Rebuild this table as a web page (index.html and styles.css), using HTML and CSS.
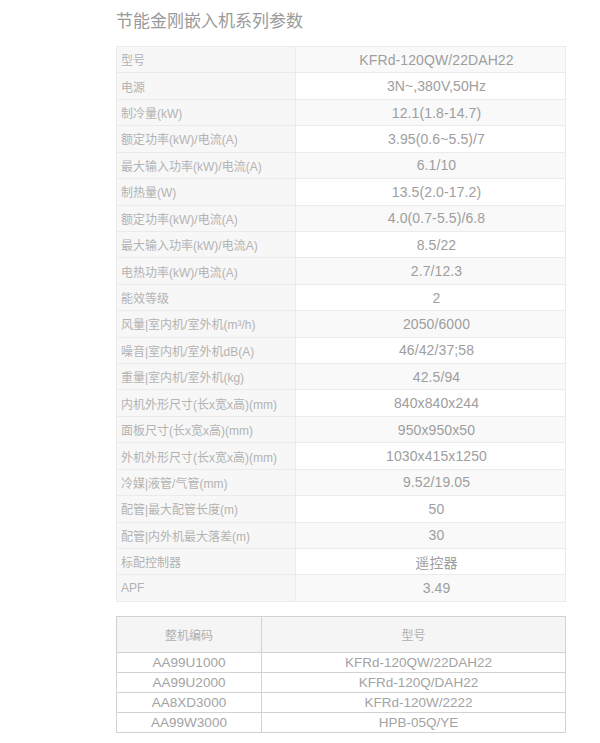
FILE: index.html
```html
<!DOCTYPE html>
<html lang="zh">
<head>
<meta charset="utf-8">
<title>节能金刚嵌入机系列参数</title>
<link rel="stylesheet" href="styles.css">
</head>
<body>
<div class="page">
  <h1 class="title">节能金刚嵌入机系列参数</h1>
  <table class="spec">
    <tbody>
      <tr><td class="k">型号</td><td class="v">KFRd-120QW/22DAH22</td></tr>
      <tr><td class="k">电源</td><td class="v">3N~,380V,50Hz</td></tr>
      <tr><td class="k">制冷量(kW)</td><td class="v">12.1(1.8-14.7)</td></tr>
      <tr><td class="k">额定功率(kW)/电流(A)</td><td class="v">3.95(0.6~5.5)/7</td></tr>
      <tr><td class="k">最大输入功率(kW)/电流(A)</td><td class="v">6.1/10</td></tr>
      <tr><td class="k">制热量(W)</td><td class="v">13.5(2.0-17.2)</td></tr>
      <tr><td class="k">额定功率(kW)/电流(A)</td><td class="v">4.0(0.7-5.5)/6.8</td></tr>
      <tr><td class="k">最大输入功率(kW)/电流A)</td><td class="v">8.5/22</td></tr>
      <tr><td class="k">电热功率(kW)/电流(A)</td><td class="v">2.7/12.3</td></tr>
      <tr><td class="k">能效等级</td><td class="v">2</td></tr>
      <tr><td class="k">风量|室内机/室外机(m³/h)</td><td class="v">2050/6000</td></tr>
      <tr><td class="k">噪音|室内机/室外机dB(A)</td><td class="v">46/42/37;58</td></tr>
      <tr><td class="k">重量|室内机/室外机(kg)</td><td class="v">42.5/94</td></tr>
      <tr><td class="k">内机外形尺寸(长x宽x高)(mm)</td><td class="v">840x840x244</td></tr>
      <tr><td class="k">面板尺寸(长x宽x高)(mm)</td><td class="v">950x950x50</td></tr>
      <tr><td class="k">外机外形尺寸(长x宽x高)(mm)</td><td class="v">1030x415x1250</td></tr>
      <tr><td class="k">冷媒|液管/气管(mm)</td><td class="v">9.52/19.05</td></tr>
      <tr><td class="k">配管|最大配管长度(m)</td><td class="v">50</td></tr>
      <tr><td class="k">配管|内外机最大落差(m)</td><td class="v">30</td></tr>
      <tr><td class="k">标配控制器</td><td class="v">遥控器</td></tr>
      <tr><td class="k">APF</td><td class="v">3.49</td></tr>
    </tbody>
  </table>
  <table class="codes">
    <thead>
      <tr><th class="c1">整机编码</th><th>型号</th></tr>
    </thead>
    <tbody>
      <tr><td>AA99U1000</td><td>KFRd-120QW/22DAH22</td></tr>
      <tr><td>AA99U2000</td><td>KFRd-120Q/DAH22</td></tr>
      <tr><td>AA8XD3000</td><td>KFRd-120W/2222</td></tr>
      <tr><td>AA99W3000</td><td>HPB-05Q/YE</td></tr>
    </tbody>
  </table>
</div>
</body>
</html>
```

FILE: styles.css
```css
html, body {
  margin: 0;
  padding: 0;
  background: #ffffff;
}

body {
  font-family: "Liberation Sans", Arial, "Noto Sans CJK SC", sans-serif;
}

.page {
  padding: 13px 0 0 116px;
  width: 450px;
}

.title {
  margin: 0 0 15px 0;
  font-size: 17px;
  line-height: 18px;
  font-weight: normal;
  color: #9a9a9a;
}

.spec {
  width: 450px;
  border-collapse: collapse;
  table-layout: fixed;
  border: 1px solid #ebebeb;
}

.spec tr {
  height: 26.43px;
}

.spec td {
  border: 1px solid #ebebeb;
  padding: 0;
  vertical-align: middle;
}

.spec .k {
  width: 174px;
  padding-left: 4px;
  background: #f7f7f7;
  color: #b3b3b3;
  font-size: 12px;
  white-space: nowrap;
}

.spec .v {
  padding-left: 12px;
  text-align: center;
  color: #9e9e9e;
  font-size: 14px;
  letter-spacing: 0.1px;
  background: #ffffff;
}

.spec tr:nth-child(odd) .v {
  background: #f9f9f9;
}

.codes {
  margin-top: 14px;
  width: 450px;
  border-collapse: collapse;
  table-layout: fixed;
  border: 1px solid #d2d2d2;
}

.codes th,
.codes td {
  border: 1px solid #d2d2d2;
  padding: 0;
  text-align: center;
  vertical-align: middle;
  font-weight: normal;
}

.codes th {
  height: 35px;
  background: #f5f5f5;
  color: #b0b0b0;
  font-size: 12px;
}

.codes .c1 {
  width: 144px;
}

.codes td {
  height: 19px;
  color: #a3a3a3;
  font-size: 13.5px;
}

.codes td + td {
  padding-left: 10px;
}
```
